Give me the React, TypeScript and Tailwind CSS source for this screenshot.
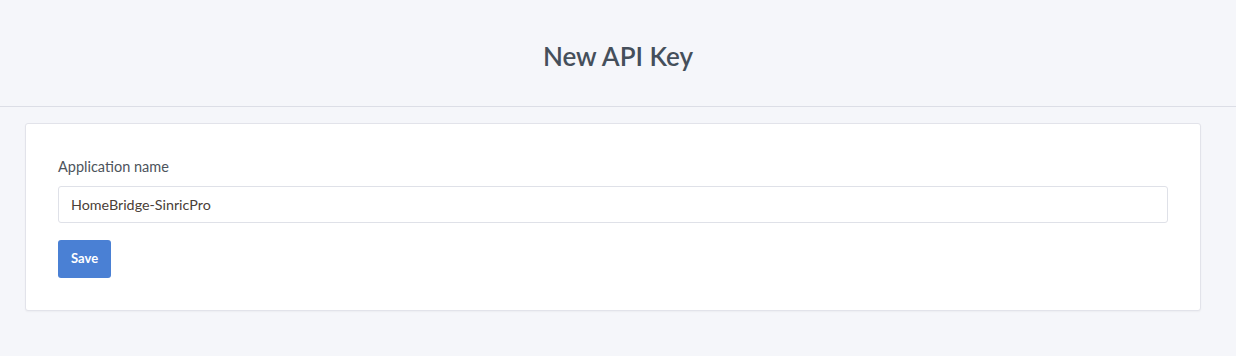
import { useState } from "react";

export default function App() {
  const [name, setName] = useState("HomeBridge-SinricPro");

  return (
    <div className="min-h-[356px] bg-[#f5f6fa] font-['Lato',sans-serif] text-[#495057]">
      <header className="h-[107px] flex items-center justify-center border-b border-[#dcdee6]">
        <h1 className="text-[26px] font-semibold text-[#454f5b] mt-[6px]">New API Key</h1>
      </header>

      <div className="px-[25px] pt-[16px] pr-[35px]">
        <div className="bg-white border border-[#e2e3ea] rounded-[3px] shadow-[0_1px_2px_rgba(0,0,0,0.04)] p-8">
          <label className="block text-[14.5px] leading-[20px] text-[#4d545c] mb-[9px] mt-[1px]">
            Application name
          </label>
          <input
            value={name}
            onChange={e => setName(e.target.value)}
            className="block w-full h-[37px] px-[12px] text-[14.3px] text-[#4a4038] border border-[#dfe1e8] rounded-[3px] outline-none"
          />
          <button className="mt-[17px] h-[38px] px-[13px] rounded-[3px] bg-[#4a80d4] text-white text-[13px] font-bold">
            Save
          </button>
        </div>
      </div>
    </div>
  );
}
